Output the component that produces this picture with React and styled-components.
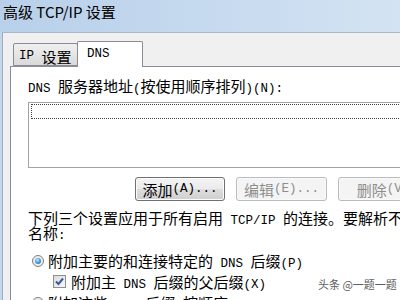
import React from "react";
import styled, { createGlobalStyle } from "styled-components";

const Global = createGlobalStyle`
  html, body { margin: 0; padding: 0; background: #fff; }
  body { font-family: "Noto Sans CJK SC", sans-serif; color: #000; }
`;

const Window = styled.div`
  position: relative;
  width: 400px;
  height: 300px;
  overflow: hidden;
  display: flex;
  flex-direction: column;
  background: #c2d6ec;
`;

const TitleBar = styled.div`
  flex: none;
  height: 32px;
  box-sizing: border-box;
  padding: 2px 0 0 3px;
  background: linear-gradient(to right, #b8d0ea 0%, #c4d8ee 45%, #d3e3f3 100%);
  font-size: 15px;
  line-height: 20px;
  white-space: nowrap;
`;

const Client = styled.div`
  flex: 1;
  min-height: 0;
  margin-left: 2px;
  border-left: 1px solid #a2acb8;
  border-top: 1px solid #a9b8c8;
  background: #f0f0f0;
  padding: 8px 0 0 7px;
  display: flex;
  flex-direction: column;
`;

const TabStrip = styled.div`
  flex: none;
  height: 25px;
  display: flex;
  align-items: flex-end;
  padding-left: 3px;
`;

const Tab = styled.div`
  position: relative;
  box-sizing: border-box;
  display: flex;
  align-items: center;
  width: ${(p) => (p.active ? 66 : 65)}px;
  height: ${(p) => (p.active ? 26 : 23)}px;
  margin-left: ${(p) => (p.active ? -1 : 0)}px;
  margin-bottom: ${(p) => (p.active ? -1 : 0)}px;
  padding: ${(p) => (p.active ? "0 0 1px 9px" : "3px 0 0 5px")};
  border: 1px solid #898c95;
  border-bottom: ${(p) => (p.active ? "none" : "1px solid #898c95")};
  border-radius: 2px 2px 0 0;
  background: ${(p) =>
    p.active ? "#fff" : "linear-gradient(#f0f0f0, #e5e5e5 50%, #d9d9d9)"};
  z-index: ${(p) => (p.active ? 2 : 1)};
  font-size: 15px;
  line-height: 15px;
  white-space: nowrap;
`;

const Panel = styled.div`
  flex: 1;
  background: #fff;
  border-top: 1px solid #898c95;
  border-left: 1px solid #898c95;
  padding: 11px 0 0 17px;
  font-size: 15px;
  line-height: 15px;
  white-space: nowrap;
`;

const Latin = styled.span`
  font-family: "Liberation Mono", monospace;
  font-size: 12.5px;
  line-height: 0;
  white-space: pre;
`;

const Label = styled.div`
  height: 15px;
`;

const ListBox = styled.div`
  box-sizing: border-box;
  width: 400px;
  height: 66px;
  margin-top: 9px;
  border: 1px solid #a3a3a3;
`;

const FocusRow = styled.div`
  box-sizing: border-box;
  height: 15px;
  margin: 1px 0 0 2px;
  border: 1px dotted #3c3c3c;
`;

const ButtonRow = styled.div`
  display: flex;
  gap: 11px;
  margin-top: 9px;
  padding-left: 107px;
`;

const Button = styled.div`
  flex: none;
  box-sizing: border-box;
  width: ${(p) => p.w || 90}px;
  height: 24px;
  display: flex;
  align-items: center;
  justify-content: center;
  border-radius: 3px;
  border: 1px solid ${(p) => (p.disabled ? "#b8bcbf" : "#707070")};
  background: ${(p) =>
    p.disabled
      ? "#f4f4f4"
      : "linear-gradient(#f4f4f4 0%, #ebebeb 48%, #dddddd 52%, #cfcfcf 100%)"};
  box-shadow: inset 0 0 0 1px ${(p) => (p.disabled ? "#f9f9f9" : "#fcfcfc")};
  color: ${(p) => (p.disabled ? "#8d8d8d" : "#000")};
`;

const Description = styled.div`
  margin-top: 9px;
  line-height: 15px;
`;

const Options = styled.div`
  margin-top: 10px;
`;

const OptionRow = styled.div`
  height: 21px;
  display: flex;
  align-items: center;
  padding-left: ${(p) => p.indent}px;
  gap: ${(p) => p.gap}px;
`;

const Radio = styled.span`
  position: relative;
  flex: none;
  box-sizing: border-box;
  width: 12px;
  height: 12px;
  border-radius: 50%;
  border: 1px solid #7d7d7d;
  background: radial-gradient(circle, #e2e2e2 0%, #f6f6f6 100%);
  &::after {
    content: "";
    position: absolute;
    left: 2px;
    top: 2px;
    width: 6px;
    height: 6px;
    border-radius: 50%;
    background: ${(p) =>
      p.checked
        ? "radial-gradient(circle at 40% 35%, #c9ecff 0%, #4fa3e0 45%, #1d5c98 100%)"
        : "transparent"};
  }
`;

const Check = styled.span`
  flex: none;
  box-sizing: border-box;
  width: 13px;
  height: 13px;
  border: 1px solid #8e8f8f;
  background: linear-gradient(135deg, #dcdcdc, #f7f7f7);
  display: flex;
  align-items: center;
  justify-content: center;
`;

const Watermark = styled.div`
  position: absolute;
  left: 318px;
  top: 278px;
  font-size: 11px;
  line-height: 13px;
  color: #5e5e5e;
  text-shadow: 0 0 2px #fff;
  white-space: nowrap;
`;

// wrap ASCII runs so they get the half-width mono look of the original dialog
const Mixed = ({ text }) =>
  text
    .split(/([\x20-\x7e]+)/)
    .filter(Boolean)
    .map((s, i) =>
      /^[\x20-\x7e]+$/.test(s) ? <Latin key={i}>{s}</Latin> : s
    );

export default function App() {
  return (
    <>
      <Global />
      <Window>
        <TitleBar>高级 TCP/IP 设置</TitleBar>
        <Client>
          <TabStrip>
            <Tab>
              <Mixed text="IP 设置" />
            </Tab>
            <Tab active>
              <Mixed text="DNS" />
            </Tab>
          </TabStrip>
          <Panel>
            <Label>
              <Mixed text="DNS 服务器地址(按使用顺序排列)(N):" />
            </Label>
            <ListBox>
              <FocusRow />
            </ListBox>
            <ButtonRow>
              <Button>
                <Mixed text="添加(A)..." />
              </Button>
              <Button w={91} disabled>
                <Mixed text="编辑(E)..." />
              </Button>
              <Button disabled>
                <Mixed text="删除(V)" />
              </Button>
            </ButtonRow>
            <Description>
              <div>
                <Mixed text="下列三个设置应用于所有启用 TCP/IP 的连接。要解析不合格的" />
              </div>
              <div>
                <Mixed text="名称:" />
              </div>
            </Description>
            <Options>
              <OptionRow indent={4} gap={4}>
                <Radio checked />
                <span>
                  <Mixed text="附加主要的和连接特定的 DNS 后缀(P)" />
                </span>
              </OptionRow>
              <OptionRow indent={25} gap={5}>
                <Check>
                  <svg width="9" height="9" viewBox="0 0 9 9">
                    <path
                      d="M1 4.5 L3.5 7 L8 1.5"
                      fill="none"
                      stroke="#3d5b9c"
                      strokeWidth="2"
                    />
                  </svg>
                </Check>
                <span>
                  <Mixed text="附加主 DNS 后缀的父后缀(X)" />
                </span>
              </OptionRow>
              <OptionRow indent={4} gap={4}>
                <Radio />
                <span>
                  <Mixed text="附加这些 DNS 后缀(按顺序)(H):" />
                </span>
              </OptionRow>
            </Options>
          </Panel>
        </Client>
        <Watermark>头条 @一题一题</Watermark>
      </Window>
    </>
  );
}
